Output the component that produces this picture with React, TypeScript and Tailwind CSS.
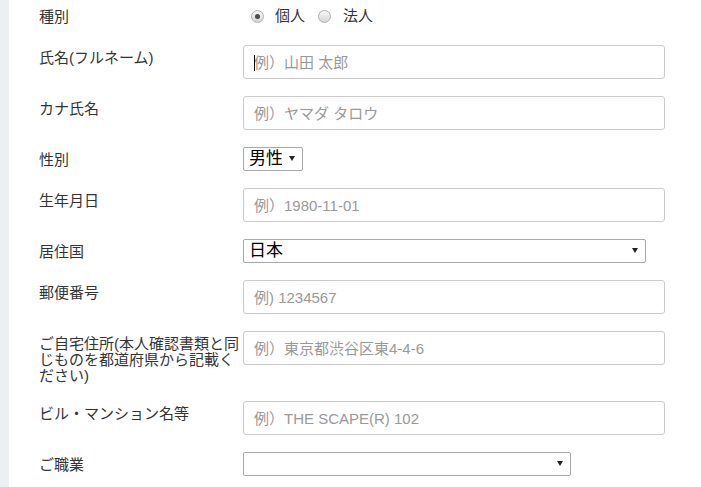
import React from "react";

function Label({ children }: { children: React.ReactNode }) {
  return (
    <div className="w-[204px] shrink-0 pt-[5px] text-[15px] leading-[16px] text-[#333]">
      {children}
    </div>
  );
}

function TextInput({ placeholder, caret }: { placeholder: string; caret?: boolean }) {
  return (
    <div className="relative">
      <input
        type="text"
        placeholder={placeholder}
        className="block h-[34px] w-[422px] rounded-[3px] border border-[#cccccc] bg-white px-[10px] text-[15px] text-[#333] outline-none placeholder:text-[#999999]"
      />
      {caret && <div className="absolute left-[11px] top-[10px] h-[16px] w-px bg-black" />}
    </div>
  );
}

function Select({ width, value, children }: { width: string; value: string; children: React.ReactNode }) {
  return (
    <div className={`relative ${width}`}>
      <select
        defaultValue={value}
        className="block h-[24px] w-full appearance-none rounded-[2px] border border-[#a9a9a9] bg-white pl-[5px] pr-[20px] text-[17px] leading-[22px] text-black outline-none"
      >
        {children}
      </select>
      <svg
        className="pointer-events-none absolute right-[8px] top-[9px]"
        width="6"
        height="5"
        viewBox="0 0 6 5"
      >
        <polygon points="0,0 6,0 3,5" fill="#222" />
      </svg>
    </div>
  );
}

function Radio({ checked }: { checked?: boolean }) {
  return (
    <span className="flex h-[13px] w-[13px] items-center justify-center rounded-full border border-[#b0b0b0] bg-gradient-to-b from-[#f8f8f8] to-[#d6d6d6]">
      {checked && <span className="h-[5px] w-[5px] rounded-full bg-[#4a4a4a]" />}
    </span>
  );
}

export default function App() {
  return (
    <div className="flex min-h-screen bg-white font-['Liberation_Sans','Noto_Sans_CJK_JP',sans-serif]">
      <div className="w-[9px] shrink-0 bg-[#ecf0f1]" />
      <div className="flex flex-col gap-[17px] pl-[30px] pt-[4px]">
        <div className="flex items-start">
          <Label>種別</Label>
          <div className="flex h-[24px] items-center pl-[8px] text-[15px] text-[#333]">
            <Radio checked />
            <span className="ml-[11px]">個人</span>
            <span className="ml-[13px]">
              <Radio />
            </span>
            <span className="ml-[12px]">法人</span>
          </div>
        </div>

        <div className="flex items-start">
          <Label>氏名(フルネーム)</Label>
          <TextInput placeholder="例）山田 太郎" caret />
        </div>

        <div className="flex items-start">
          <Label>カナ氏名</Label>
          <TextInput placeholder="例）ヤマダ タロウ" />
        </div>

        <div className="flex items-start">
          <Label>性別</Label>
          <Select width="w-[60px]" value="男性">
            <option value="男性">男性</option>
            <option value="女性">女性</option>
          </Select>
        </div>

        <div className="flex items-start">
          <Label>生年月日</Label>
          <TextInput placeholder="例）1980-11-01" />
        </div>

        <div className="flex items-start">
          <Label>居住国</Label>
          <Select width="w-[403px]" value="日本">
            <option value="日本">日本</option>
          </Select>
        </div>

        <div className="flex items-start">
          <Label>郵便番号</Label>
          <TextInput placeholder="例) 1234567" />
        </div>

        <div className="flex items-start">
          <Label>ご自宅住所(本人確認書類と同じものを都道府県から記載ください)</Label>
          <TextInput placeholder="例）東京都渋谷区東4-4-6" />
        </div>

        <div className="flex items-start">
          <Label>ビル・マンション名等</Label>
          <TextInput placeholder="例）THE SCAPE(R) 102" />
        </div>

        <div className="flex items-start">
          <Label>ご職業</Label>
          <Select width="w-[328px]" value="">
            <option value=""></option>
          </Select>
        </div>
      </div>
    </div>
  );
}
